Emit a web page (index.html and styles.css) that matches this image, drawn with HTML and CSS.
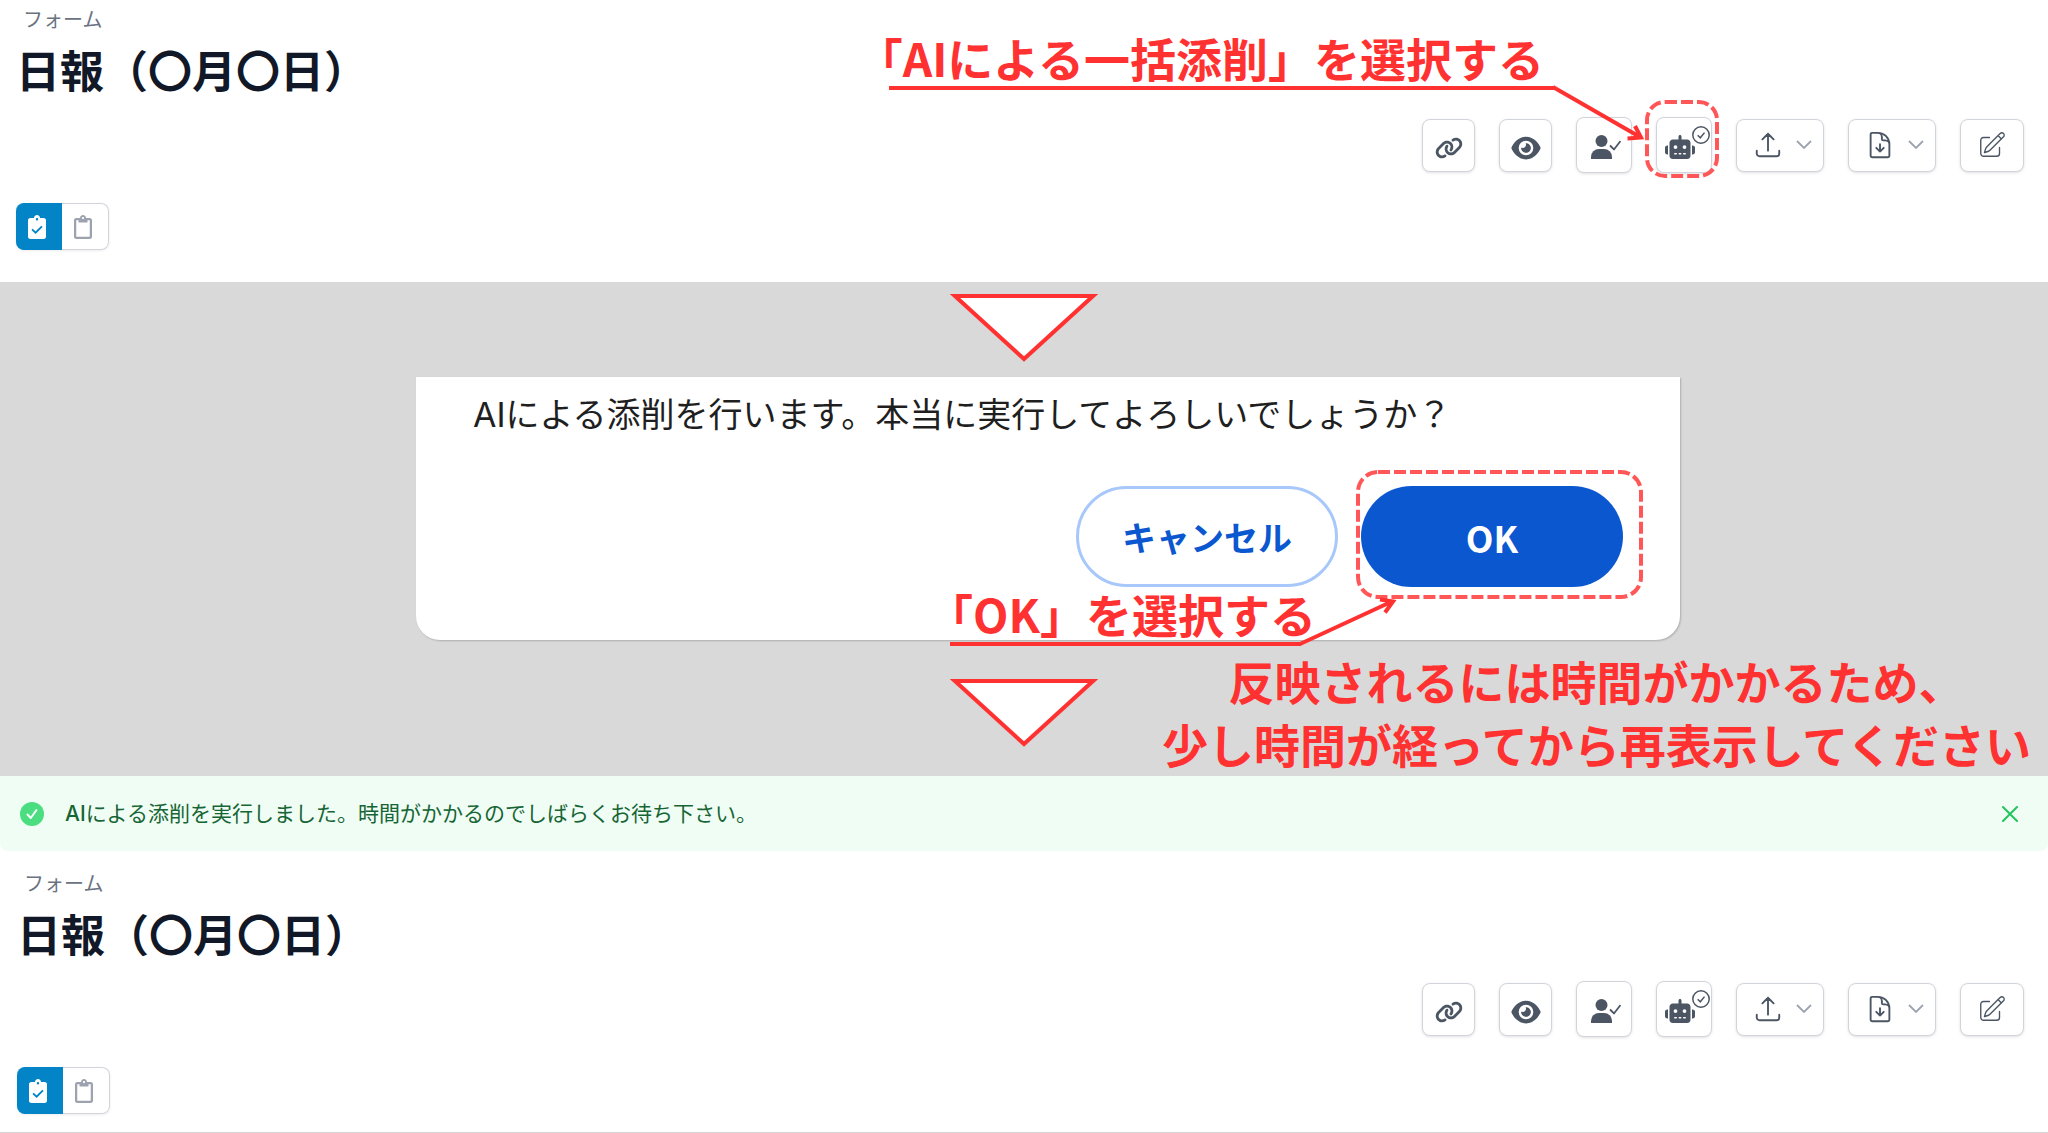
FILE: index.html
```html
<!DOCTYPE html>
<html lang="ja">
	<head>
		<meta charset="utf-8">
		<title>日報（〇月〇日）</title>
		<link rel="stylesheet" href="styles.css">
	</head>
	<body>
		<svg class="sprite" aria-hidden="true">
			<symbol id="i-link" viewBox="0 0 640 512"><path d="M579.8 267.7c56.5-56.5 56.5-148 0-204.5c-50-50-128.8-56.5-186.3-15.4l-1.6 1.1c-14.4 10.3-17.7 30.3-7.4 44.6s30.3 17.7 44.6 7.4l1.6-1.1c32.1-22.9 76-19.3 103.8 8.6c31.5 31.5 31.5 82.5 0 114L422.3 334.8c-31.5 31.5-82.5 31.5-114 0c-27.9-27.9-31.5-71.8-8.6-103.8l1.1-1.6c10.3-14.4 6.9-34.4-7.4-44.6s-34.4-6.9-44.6 7.4l-1.1 1.6C206.5 251.2 213 330 263 380c56.5 56.5 148 56.5 204.5 0L579.8 267.7zM60.2 244.3c-56.5 56.5-56.5 148 0 204.5c50 50 128.8 56.5 186.3 15.4l1.6-1.1c14.4-10.3 17.7-30.3 7.4-44.6s-30.3-17.7-44.6-7.4l-1.6 1.1c-32.1 22.9-76 19.3-103.8-8.6C74 372 74 321 105.5 289.5L217.7 177.2c31.5-31.5 82.5-31.5 114 0c27.9 27.9 31.5 71.8 8.6 103.9l-1.1 1.6c-10.3 14.4-6.9 34.4 7.4 44.6s34.4 6.9 44.6-7.4l1.1-1.6C433.5 260.8 427 182 377 132c-56.5-56.5-148-56.5-204.5 0L60.2 244.3z"/></symbol>
			<symbol id="i-eye" viewBox="0 0 576 512"><path d="M288 32c-80.8 0-145.5 36.8-192.6 80.6C48.6 156 17.3 208 2.5 243.7c-3.3 7.9-3.3 16.7 0 24.6C17.3 304 48.6 356 95.4 399.4C142.5 443.2 207.2 480 288 480s145.5-36.8 192.6-80.6c46.8-43.5 78.1-95.4 93-131.1c3.3-7.9 3.3-16.7 0-24.6c-14.9-35.7-46.2-87.7-93-131.1C433.5 68.8 368.8 32 288 32zM144 256a144 144 0 1 1 288 0 144 144 0 1 1 -288 0zm144-64c0 35.3-28.7 64-64 64c-7.1 0-13.9-1.2-20.3-3.3c-5.5-1.8-11.9 1.6-11.7 7.4c.3 6.9 1.3 13.8 3.2 20.7c13.7 51.2 66.4 81.6 117.6 67.9s81.6-66.4 67.9-117.6c-11.1-41.5-47.8-69.4-88.6-71.1c-5.8-.2-9.2 6.1-7.4 11.7c2.1 6.4 3.3 13.2 3.3 20.3z"/></symbol>
			<symbol id="i-user" viewBox="0 0 30 24"><circle cx="10.5" cy="6" r="6"/><path d="M0 24v-2a8 8 0 0 1 8-8h5a8 8 0 0 1 8 8v2z"/><path d="M19 10.500l4 4 6.500-8.500" fill="none" stroke="currentColor" stroke-width="1.800"/></symbol>
			<symbol id="i-robot" viewBox="0 0 640 512"><path d="M320 0c17.700 0 32 14.300 32 32V96H472c39.800 0 72 32.200 72 72V440c0 39.800-32.200 72-72 72H168c-39.800 0-72-32.200-72-72V168c0-39.800 32.200-72 72-72H288V32c0-17.700 14.300-32 32-32zM208 384c-8.800 0-16 7.200-16 16s7.200 16 16 16h32c8.800 0 16-7.200 16-16s-7.200-16-16-16H208zm96 0c-8.800 0-16 7.200-16 16s7.200 16 16 16h32c8.800 0 16-7.200 16-16s-7.200-16-16-16H304zm96 0c-8.800 0-16 7.200-16 16s7.200 16 16 16h32c8.800 0 16-7.200 16-16s-7.200-16-16-16H400zM264 256a40 40 0 1 0 -80 0 40 40 0 1 0 80 0zm152 40a40 40 0 1 0 0-80 40 40 0 1 0 0 80zM48 224H64V416H48c-26.500 0-48-21.500-48-48V272c0-26.500 21.500-48 48-48zm544 0c26.500 0 48 21.500 48 48v96c0 26.500-21.500 48-48 48H576V224h16z"/></symbol>
			<symbol id="i-done" viewBox="0 0 18 18"><circle cx="9" cy="9" r="8.200" fill="none" stroke="currentColor" stroke-width="1.500"/><path d="M5.700 9.200l2.600 2.600 4.200-5.200" fill="none" stroke="currentColor" stroke-width="1.500"/></symbol>
			<symbol id="i-upload" viewBox="0 0 24 24"><path class="line" d="M3 16.500v2.250A2.250 2.250 0 005.250 21h13.500A2.250 2.250 0 0021 18.750V16.500m-13.500-9L12 3m0 0l4.500 4.500M12 3v13.500"/></symbol>
			<symbol id="i-file" viewBox="0 0 24 24"><path class="line" d="M19.500 14.250v-2.625a3.375 3.375 0 00-3.375-3.375h-1.500A1.125 1.125 0 0113.500 7.125v-1.500a3.375 3.375 0 00-3.375-3.375H8.250m.750 12l3 3m0 0l3-3m-3 3v-6m-1.500-9H5.625c-.621 0-1.125.504-1.125 1.125v17.250c0 .621.504 1.125 1.125 1.125h12.750c.621 0 1.125-.504 1.125-1.125V11.250a9 9 0 00-9-9z"/></symbol>
			<symbol id="i-edit" viewBox="0 0 24 24"><path class="line thin" d="M16.862 4.487l1.687-1.688a1.875 1.875 0 112.652 2.652L10.582 16.070a4.500 4.500 0 01-1.897 1.130L6 18l.8-2.685a4.500 4.500 0 011.130-1.897l8.932-8.931zm0 0L19.500 7.125M18 14v4.750A2.250 2.250 0 0115.750 21H5.250A2.250 2.250 0 013 18.750V8.250A2.250 2.250 0 015.250 6H10"/></symbol>
			<symbol id="i-chevron" viewBox="0 0 16 10"><path d="M1.500 1.500L8 8l6.500-6.500" fill="none" stroke="currentColor" stroke-width="1.800" stroke-linecap="round"/></symbol>
			<symbol id="i-checked" viewBox="0 0 384 512"><path fill-rule="evenodd" d="M336 64h-80c0-35.300-28.700-64-64-64s-64 28.700-64 64H48C21.500 64 0 85.500 0 112v352c0 26.500 21.500 48 48 48h288c26.500 0 48-21.500 48-48V112c0-26.500-21.500-48-48-48zM192 66a26 26 0 1 1 0 52 26 26 0 1 1 0-52z"/><path class="tick" d="M86 306l76 72 136-136"/></symbol>
			<symbol id="i-clipboard" viewBox="0 0 384 512"><path d="M336 64h-80c0-35.300-28.700-64-64-64s-64 28.700-64 64H48C21.500 64 0 85.500 0 112v352c0 26.500 21.500 48 48 48h288c26.500 0 48-21.500 48-48V112c0-26.500-21.500-48-48-48zM192 40c13.300 0 24 10.700 24 24s-10.700 24-24 24-24-10.700-24-24 10.700-24 24-24zm144 418c0 3.300-2.700 6-6 6H54c-3.300 0-6-2.700-6-6V118c0-3.300 2.700-6 6-6h42v36c0 6.600 5.400 12 12 12h168c6.600 0 12-5.400 12-12v-36h42c3.300 0 6 2.700 6 6z"/></symbol>
		</svg>

		<section class="panel">
			<p class="crumb">フォーム</p>
			<h1 class="title">日報（〇月〇日）</h1>
			<div class="toolbar">
				<button class="btn" aria-label="リンク"><svg class="icon-link"><use href="#i-link"/></svg></button>
				<button class="btn" aria-label="表示"><svg class="icon-eye"><use href="#i-eye"/></svg></button>
				<button class="btn large" aria-label="ユーザー確認"><svg class="icon-user"><use href="#i-user"/></svg></button>
				<div class="marked">
					<button class="btn large robot" aria-label="AIによる一括添削"><svg class="icon-robot"><use href="#i-robot"/></svg><svg class="badge"><use href="#i-done"/></svg></button>
					<svg class="frame frame-robot"><rect x="2" y="2" width="70" height="74" rx="18"/></svg>
				</div>
				<button class="btn menu" aria-label="アップロード"><svg class="icon"><use href="#i-upload"/></svg><svg class="chevron"><use href="#i-chevron"/></svg></button>
				<button class="btn menu" aria-label="ダウンロード"><svg class="icon"><use href="#i-file"/></svg><svg class="chevron"><use href="#i-chevron"/></svg></button>
				<button class="btn edit" aria-label="編集"><svg class="icon"><use href="#i-edit"/></svg></button>
			</div>
			<div class="switch">
				<button class="on" aria-label="提出済み"><svg><use href="#i-checked"/></svg></button>
				<button aria-label="未提出"><svg><use href="#i-clipboard"/></svg></button>
			</div>
			<div class="note note-top">
				<p>「AIによる一括添削」を選択する</p>
				<svg width="764" height="60"><path d="M2 6h665"/><path d="M666 5l87 50M748 44l6 11.500-13.500 1"/></svg>
			</div>
		</section>

		<section class="steps">
			<svg class="down" viewBox="0 0 148 70"><path d="M5 3h138L74 66z"/></svg>
			<div class="sheet">
				<div class="dialog">
					<p>AIによる添削を行います。本当に実行してよろしいでしょうか？</p>
					<div class="actions">
						<button class="cancel">キャンセル</button>
						<div class="marked">
							<button class="ok">OK</button>
							<svg class="frame frame-ok"><rect x="2" y="2" width="283" height="125" rx="20"/></svg>
						</div>
					</div>
				</div>
				<div class="note note-ok">
					<p>「OK」を選択する</p>
					<svg width="460" height="60"><path d="M1 51h351"/><path d="M351 51l93-43M431 6.500l13 2-8 11"/></svg>
				</div>
			</div>
			<svg class="down" viewBox="0 0 148 70"><path d="M5 3h138L74 66z"/></svg>
			<p class="remark">反映されるには時間がかかるため、<br>少し時間が経ってから再表示してください</p>
		</section>

		<div class="alert" role="status">
			<svg class="alert-icon" viewBox="0 0 24 24"><circle cx="12" cy="12" r="12" fill="#4ade80"/><path d="M7.500 12.500l3.300 3.500 5.700-8" fill="none" stroke="#fff" stroke-width="2" stroke-linecap="round" stroke-linejoin="round"/></svg>
			<p><b>AI</b>による添削を実行しました。時間がかかるのでしばらくお待ち下さい。</p>
			<button class="close" aria-label="閉じる"><svg viewBox="0 0 16 16"><path d="M1 1l14 14M15 1L1 15"/></svg></button>
		</div>

		<section class="panel after">
			<p class="crumb">フォーム</p>
			<h2 class="title">日報（〇月〇日）</h2>
			<div class="toolbar">
				<button class="btn" aria-label="リンク"><svg class="icon-link"><use href="#i-link"/></svg></button>
				<button class="btn" aria-label="表示"><svg class="icon-eye"><use href="#i-eye"/></svg></button>
				<button class="btn large" aria-label="ユーザー確認"><svg class="icon-user"><use href="#i-user"/></svg></button>
				<button class="btn large robot" aria-label="AIによる一括添削"><svg class="icon-robot"><use href="#i-robot"/></svg><svg class="badge"><use href="#i-done"/></svg></button>
				<button class="btn menu" aria-label="アップロード"><svg class="icon"><use href="#i-upload"/></svg><svg class="chevron"><use href="#i-chevron"/></svg></button>
				<button class="btn menu" aria-label="ダウンロード"><svg class="icon"><use href="#i-file"/></svg><svg class="chevron"><use href="#i-chevron"/></svg></button>
				<button class="btn edit" aria-label="編集"><svg class="icon"><use href="#i-edit"/></svg></button>
			</div>
			<div class="switch">
				<button class="on" aria-label="提出済み"><svg><use href="#i-checked"/></svg></button>
				<button aria-label="未提出"><svg><use href="#i-clipboard"/></svg></button>
			</div>
		</section>
	</body>
</html>
```
FILE: styles.css
```css
*{
	box-sizing: border-box;
	margin: 0;
	padding: 0;
}
body{
	background-color: #fff;
	color: #111827;
	font-family: Inter, "Noto Sans CJK JP", sans-serif;
}
button{
	font: inherit;
	background: none;
	border: none;
	cursor: pointer;
}
svg{
	display: block;
	flex: none;
	fill: currentColor;
}
.sprite{
	position: absolute;
	width: 0;
	height: 0;
}
.line{
	fill: none;
	stroke: currentColor;
	stroke-width: 1.5;
	stroke-linecap: round;
	stroke-linejoin: round;
}
.thin{
	stroke-width: 1.1;
}

/* form header */
.panel{
	position: relative;
	padding: 6px 24px 32px 16px;
}
.crumb{
	padding-left: 7px;
	color: #6b7280;
	font-size: 20px;
	line-height: 28px;
}
.title{
	margin-top: 10px;
	font-size: 44px;
	font-weight: 700;
	line-height: 56px;
}
.toolbar{
	display: flex;
	justify-content: flex-end;
	align-items: center;
	gap: 24px;
	margin-top: 17px;
}
.btn{
	position: relative;
	display: flex;
	justify-content: center;
	align-items: center;
	width: 53px;
	height: 53px;
	background-color: #fff;
	border: 1px solid #d1d5db;
	border-radius: 8px;
	box-shadow: 0 1px 3px rgba(0, 0, 0, .12);
	color: #4b5563;
}
.btn.large{
	width: 56px;
	height: 56px;
}
.btn.menu{
	justify-content: space-between;
	width: 88px;
	padding: 0 11px 0 16px;
}
.btn.edit{
	width: 64px;
}
.icon{
	width: 30px;
	height: 30px;
}
.icon-link{
	width: 28px;
	height: 24px;
	margin-top: 6px;
}
.icon-eye{
	width: 30px;
	height: 26px;
	margin-top: 6px;
}
.icon-user{
	width: 30px;
	height: 24px;
	margin: 4px 0 0 4px;
}
.btn.robot{
	justify-content: flex-start;
	padding-left: 8px;
}
.icon-robot{
	width: 30px;
	height: 24px;
	margin-top: 4px;
}
.badge{
	position: absolute;
	top: 8px;
	right: 1px;
	width: 18px;
	height: 18px;
}
.chevron{
	width: 16px;
	height: 10px;
	color: #9ca3af;
}
.switch{
	display: flex;
	width: max-content;
	margin-top: 30px;
	border-radius: 8px;
	box-shadow: 0 1px 3px rgba(0, 0, 0, .08);
}
.switch button{
	display: flex;
	align-items: center;
	width: 47px;
	height: 47px;
	padding-left: 12px;
	border: 1px solid #d1d5db;
	border-left: none;
	border-radius: 0 8px 8px 0;
	color: #9ca3af;
}
.switch .on{
	width: 46px;
	background-color: #0284c7;
	border-color: #0284c7;
	border-radius: 8px 0 0 8px;
	color: #fff;
}
.switch svg{
	width: 18px;
	height: 24px;
}
.tick{
	fill: none;
	stroke: #0284c7;
	stroke-width: 40;
}
.after{
	padding: 19px 24px 18px 17px;
	border-bottom: 1px solid #d4d4d4;
}

/* red notes */
.marked{
	position: relative;
}
.frame{
	position: absolute;
	fill: none;
	stroke: #ff5757;
	stroke-width: 4;
	stroke-dasharray: 12 4;
	pointer-events: none;
}
.frame-robot{
	top: -17px;
	left: -11px;
	width: 74px;
	height: 78px;
}
.frame-ok{
	top: -16px;
	left: -5px;
	width: 287px;
	height: 129px;
}
.note, .remark{
	position: absolute;
	color: #ff3131;
	font-family: "Noto Sans CJK JP", sans-serif;
	font-size: 46px;
	font-weight: 700;
	line-height: 63px;
	white-space: nowrap;
}
.note svg{
	position: absolute;
	fill: none;
	stroke: #ff3131;
	stroke-width: 4;
}
.note-top{
	top: 26px;
	right: 504px;
}
.note-top svg{
	top: 56px;
	right: -107px;
}
.note-ok{
	right: 364px;
	bottom: -5px;
}
.note-ok svg{
	left: 22px;
	bottom: -8px;
}
.remark{
	right: 17px;
	bottom: 1px;
	text-align: center;
}

/* steps */
.steps{
	position: relative;
	padding: 11px 24px 28px;
	background-color: #d9d9d9;
}
.down{
	width: 148px;
	height: 70px;
	margin: 0 auto;
	fill: #fff;
	stroke: #ff3131;
	stroke-width: 4;
}
.sheet{
	position: relative;
	width: 1264px;
	max-width: 100%;
	margin: 14px auto 38px;
	left: 24px;
}
.dialog{
	padding: 13px 57px 53px;
	background-color: #fff;
	border-radius: 0 0 24px 24px;
	box-shadow: 1px 1px 2px rgba(0, 0, 0, .2);
	color: #1f1f1f;
	font-size: 34px;
	line-height: 50px;
}
.actions{
	display: flex;
	justify-content: flex-end;
	gap: 23px;
	margin-top: 46px;
	font-family: "Noto Sans CJK JP", sans-serif;
}
.actions button{
	width: 262px;
	height: 101px;
	border-radius: 51px;
	font-weight: 700;
}
.cancel{
	border: 3px solid #a8c7fa;
	color: #0b57d0;
}
.ok{
	background-color: #0b57d0;
	color: #fff;
	font-size: 36px;
}

/* result message */
.alert{
	display: flex;
	align-items: center;
	padding: 20px 30px 20px 20px;
	background-color: #f0fdf4;
	border-radius: 0 0 8px 8px;
	color: #166534;
	font-size: 21px;
	line-height: 35px;
}
.alert p{
	flex: 1;
	margin-left: 21px;
}
.alert b{
	font-weight: 500;
}
.alert-icon{
	width: 24px;
	height: 24px;
}
.close svg{
	width: 16px;
	height: 16px;
	fill: none;
	stroke: #22c55e;
	stroke-width: 2;
	stroke-linecap: round;
}
```
